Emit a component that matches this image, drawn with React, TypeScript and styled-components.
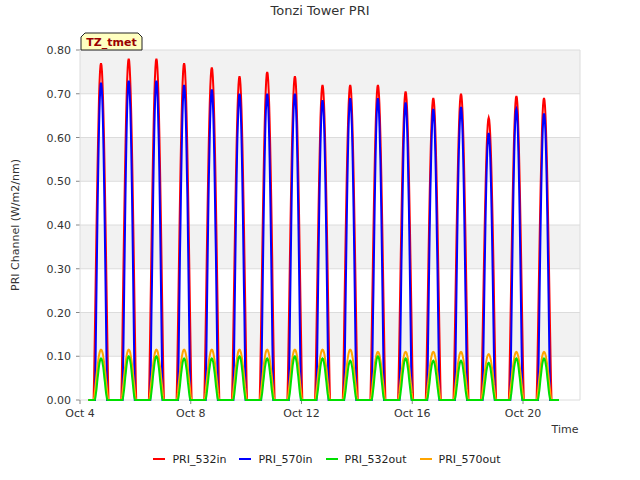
import React from "react";
import styled, { createGlobalStyle } from "styled-components";

const Global = createGlobalStyle`
  html, body { margin: 0; padding: 0; background: #fff; }
  body { font-family: "DejaVu Sans", sans-serif; }
`;

const Page = styled.div`
  width: 640px;
  height: 480px;
  display: flex;
  flex-direction: column;
`;
const Title = styled.div`
  height: 22px;
  line-height: 22px;
  text-align: center;
  font-size: 13px;
  color: #333;
`;
const Chart = styled.svg`
  display: block;
  width: 640px;
  height: 418px;
`;
const Legend = styled.div`
  flex: 1;
  display: flex;
  align-items: center;
  justify-content: center;
  gap: 13px;
  padding-left: 14px;
  padding-bottom: 2px;
  font-size: 11px;
  color: #222;
`;
const Item = styled.div`
  display: flex;
  align-items: center;
  gap: 7px;
`;
const Swatch = styled.span<{ $c: string }>`
  display: inline-block;
  width: 12px;
  height: 2px;
  background: ${(p) => p.$c};
`;

const X0 = 80, X1 = 580, Y0 = 28, Y1 = 378;
const dayPx = (523 - 80) / 16;
const xs = (d: number) => X0 + d * dayPx;
const ys = (v: number) => Y1 - (v / 0.8) * (Y1 - Y0);

const red = [0.77, 0.78, 0.78, 0.77, 0.76, 0.74, 0.75, 0.74, 0.72, 0.72, 0.72, 0.705, 0.69, 0.70, 0.645, 0.695, 0.69];
const blue = [0.725, 0.73, 0.73, 0.72, 0.71, 0.70, 0.70, 0.70, 0.685, 0.69, 0.69, 0.68, 0.665, 0.67, 0.61, 0.665, 0.655];
const green = [0.095, 0.1, 0.1, 0.095, 0.095, 0.1, 0.095, 0.1, 0.095, 0.09, 0.1, 0.095, 0.09, 0.09, 0.085, 0.095, 0.095];
const orange = [0.115, 0.115, 0.115, 0.115, 0.115, 0.115, 0.115, 0.115, 0.115, 0.115, 0.11, 0.11, 0.11, 0.11, 0.105, 0.11, 0.11];

function series(peaks: number[], start: number, width: number, pow: number) {
  const pts: string[] = [];
  pts.push(`${xs(0.3)},${ys(0)}`);
  peaks.forEach((p, i) => {
    const s = i + start;
    for (let k = 0; k <= 30; k++) {
      const t = k / 30;
      const v = p * Math.pow(Math.sin(Math.PI * t), pow);
      pts.push(`${xs(s + t * width).toFixed(1)},${ys(v).toFixed(1)}`);
    }
  });
  pts.push(`${xs(17.3)},${ys(0)}`);
  return pts.join(" ");
}

const yTicks = [0, 0.1, 0.2, 0.3, 0.4, 0.5, 0.6, 0.7, 0.8];
const xTicks = [
  { d: 0, l: "Oct 4" },
  { d: 4, l: "Oct 8" },
  { d: 8, l: "Oct 12" },
  { d: 12, l: "Oct 16" },
  { d: 16, l: "Oct 20" },
];

export default function App() {
  return (
    <Page>
      <Global />
      <Title>Tonzi Tower PRI</Title>
      <Chart viewBox="0 0 640 418">
        {[0.7, 0.5, 0.3, 0.1].map((v) => (
          <rect key={v} x={X0} y={ys(v + 0.1)} width={X1 - X0} height={ys(v) - ys(v + 0.1)} fill="#f2f2f2" />
        ))}
        {yTicks.map((v) => (
          <g key={v}>
            <line x1={X0} x2={X1} y1={ys(v)} y2={ys(v)} stroke="#dcdcdc" strokeWidth={1} />
            <line x1={X0 - 4} x2={X0} y1={ys(v)} y2={ys(v)} stroke="#888" />
            <text x={X0 - 9} y={ys(v) + 4} textAnchor="end" fontSize={11} fill="#333" fontFamily="DejaVu Sans">
              {v.toFixed(2)}
            </text>
          </g>
        ))}
        <line x1={X0} x2={X0} y1={Y0} y2={Y1} stroke="#dcdcdc" />
        <line x1={X1} x2={X1} y1={Y0} y2={Y1} stroke="#dcdcdc" />
        {xTicks.map((t) => (
          <g key={t.l}>
            <line x1={xs(t.d)} x2={xs(t.d)} y1={Y1} y2={Y1 + 4} stroke="#888" />
            <text x={xs(t.d)} y={Y1 + 17} textAnchor="middle" fontSize={11} fill="#333" fontFamily="DejaVu Sans">
              {t.l}
            </text>
          </g>
        ))}
        <text x={565} y={411} textAnchor="middle" fontSize={11} fill="#333" fontFamily="DejaVu Sans">Time</text>
        <text transform={`translate(19,${(Y0 + Y1) / 2}) rotate(-90)`} textAnchor="middle" fontSize={11} fill="#333" fontFamily="DejaVu Sans">
          PRI Channel (W/m2/nm)
        </text>
        <polyline points={series(red, 0.49, 0.54, 1.2)} fill="none" stroke="#ff0000" strokeWidth={2} />
        <polyline points={series(blue, 0.54, 0.44, 1.1)} fill="none" stroke="#0000ff" strokeWidth={2} />
        <polyline points={series(orange, 0.5, 0.52, 1.2)} fill="none" stroke="#ffa500" strokeWidth={2} />
        <polyline points={series(green, 0.53, 0.46, 1.6)} fill="none" stroke="#00e000" strokeWidth={2} />
        <path d="M81,28 L81,15 L85,11 L138,11 L142,15 L142,28 Z" fill="#ffffc0" stroke="#222" strokeWidth={1} />
        <text x={111.5} y={24} textAnchor="middle" fontSize={11} fontWeight="bold" fill="#990000" fontFamily="DejaVu Sans">
          TZ_tmet
        </text>
      </Chart>
      <Legend>
        <Item><Swatch $c="#ff0000" />PRI_532in</Item>
        <Item><Swatch $c="#0000ff" />PRI_570in</Item>
        <Item><Swatch $c="#00e000" />PRI_532out</Item>
        <Item><Swatch $c="#ffa500" />PRI_570out</Item>
      </Legend>
    </Page>
  );
}
